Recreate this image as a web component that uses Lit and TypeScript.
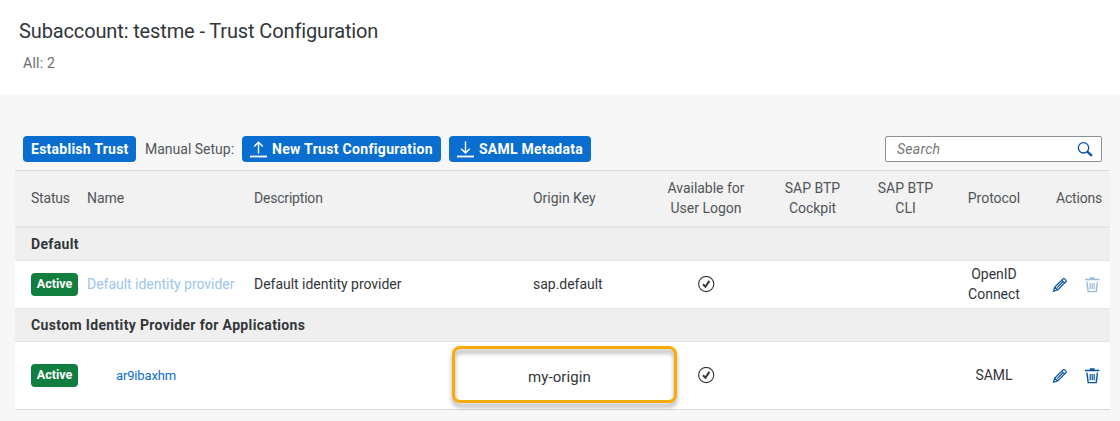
import { LitElement, html, css, svg } from "lit";
import { customElement, property } from "lit/decorators.js";

type IconName = "upload" | "download" | "search" | "edit" | "delete" | "accept";

const glyphs: Record<IconName, unknown> = {
  upload: svg`<path d="M0 15.5h17" stroke-width="1.8"/><path d="M8.5 12.5V1.5M4.2 5.4L8.5 1.2l4.3 4.2" stroke-width="1.4"/>`,
  download: svg`<path d="M0 15.5h17" stroke-width="1.8"/><path d="M8.5 .5v11.2M4.2 7.8l4.3 4.2 4.3-4.2" stroke-width="1.4"/>`,
  search: svg`<circle cx="6.5" cy="6.8" r="5.2" stroke-width="1.3"/><path d="M10.3 10.6l4.6 4.3" stroke-width="2.3"/>`,
  edit: svg`<path d="M1.5 15.2l1.2-4.2 8.6-8.3q.6-.6 1.2 0l1.6 1.6q.6.6 0 1.2l-8.5 8.4zM2.7 11l2.9 2.9M9.7 4.3l2.8 2.8M5.1 11.6l5.9-5.8" stroke-width="1.2"/>`,
  delete: svg`<path d="M1 3.5h14.4M5.8 1.9h4.8" stroke-width="1.5"/><path d="M2.9 5.6l1.3 10h8l1.3-10" stroke-width="1.4"/><path d="M6.2 7v6.2M8.2 7v6.2M10.2 7v6.2" stroke-width="1.2"/>`,
  accept: svg`<circle cx="8.2" cy="8" r="7.6" stroke-width="1.1"/><path d="M5 8.3l2.4 2.4 4-5.8" stroke-width="2"/>`,
};

@customElement("ui-icon")
class UiIcon extends LitElement {
  static styles = css`
    :host { display: inline-flex; width: 17px; height: 17px; flex: none; }
    svg { display: block; fill: none; stroke: currentColor; }
  `;
  @property() name: IconName = "edit";
  render() {
    return html`<svg width="17" height="17" viewBox="0 0 17 17">${glyphs[this.name]}</svg>`;
  }
}

@customElement("app-root")
class AppRoot extends LitElement {
  static styles = css`
    :host {
      display: block;
      height: 421px;
      overflow: hidden;
      background: #f7f7f7;
      color: #32363a;
      font: 14px/20px Roboto, "Noto Sans", sans-serif;
    }
    *, *::before { box-sizing: border-box; }
    header { height: 95px; background: #fff; padding: 18px 0 0 19px; }
    h1 { margin: 0; font-weight: 400; font-size: 20px; line-height: 26px; letter-spacing: -.13px; }
    .count { margin: 9px 0 0 4px; color: #6a6d70; letter-spacing: .25px; }
    .toolbar { display: flex; align-items: center; height: 26px; margin: 41px 18px 8px 23px; }
    .btn {
      display: flex; align-items: center; height: 26px; padding: 0 8px;
      border: 0; border-radius: 4px; background: #0a6ed1; color: #fff;
      font: 700 14px/20px Roboto, sans-serif; white-space: nowrap;
    }
    .btn ui-icon { margin-right: 5px; }
    .establish { width: 113px; letter-spacing: .25px; }
    .new { width: 199px; letter-spacing: .32px; margin-right: 8px; }
    .metadata { width: 142px; letter-spacing: .22px; }
    .label { width: 106px; padding-left: 9px; white-space: nowrap; color: #515559; }
    .search {
      display: flex; align-items: center; justify-content: space-between;
      width: 217px; height: 26px; margin-left: auto; padding: 0 7px 0 11px;
      border: 1px solid #89919a; border-radius: 2px; background: #fff;
      color: #74777a; font-style: italic; letter-spacing: .25px;
    }
    .search ui-icon { color: #0854a0; }
    .table { margin: 0 10px 0 15px; border-top: 1px solid #d9d9d9; border-bottom: 1px solid #d9d9d9; background: #fff; }
    .row {
      display: grid; align-items: center; padding-left: 16px;
      grid-template-columns: 56px 167px 279px 127px 92px 121px 65px 112px 60px;
      letter-spacing: -.02px;
    }
    .head { height: 57px; padding-bottom: 1px; background: #f2f2f2; border-bottom: 2px solid #e5e5e5; color: #515559; }
    .tight { letter-spacing: -.2px; }
    .group {
      display: flex; align-items: center; height: 33px; padding-left: 16px;
      background: #efefef; border-bottom: 1px solid #e5e5e5; font-weight: 700; letter-spacing: .35px;
    }
    .default { height: 48px; padding-bottom: 1px; border-bottom: 1px solid #e5e5e5; }
    .custom { height: 67px; padding-bottom: 1px; }
    .center { text-align: center; }
    .right { text-align: right; padding-right: 8px; }
    .badge {
      display: flex; align-items: center; justify-content: center; width: 47px; height: 23px;
      border-radius: 4px; background: #107e3e; color: #fff; font-weight: 700; font-size: 12.5px;
    }
    .link { color: #0a6ed1; }
    .disabled { color: #9dc5ed; }
    .indent { padding: 1px 0 0 29px; font-size: 13px; letter-spacing: -.15px; }
    .status { display: flex; justify-content: center; }
    .actions { display: flex; gap: 15px; padding: 1px 0 0 2px; color: #0854a0; }
    .faded { opacity: .4; }
    .origin { position: relative; height: 57px; line-height: 61px; margin-left: -5px; font-size: 15px; letter-spacing: .1px; }
    .origin::before {
      content: ""; position: absolute; left: -76px; top: -1px; width: 225px; height: 57px;
      border: 3px solid #fbab09; border-radius: 8px; filter: drop-shadow(0 4px 2px rgba(0, 0, 0, .35));
    }
  `;

  render() {
    return html`
      <header>
        <h1>Subaccount: testme - Trust Configuration</h1>
        <div class="count">All: 2</div>
      </header>
      <div class="toolbar">
        <button class="btn establish">Establish Trust</button>
        <span class="label">Manual Setup:</span>
        <button class="btn new"><ui-icon name="upload"></ui-icon>New Trust Configuration</button>
        <button class="btn metadata"><ui-icon name="download"></ui-icon>SAML Metadata</button>
        <div class="search"><span>Search</span><ui-icon name="search"></ui-icon></div>
      </div>
      <div class="table">
        <div class="row head">
          <span class="tight">Status</span><span>Name</span><span class="tight">Description</span><span>Origin Key</span>
          <span class="center">Available for<br />User Logon</span>
          <span class="center">SAP BTP<br />Cockpit</span>
          <span class="center">SAP BTP<br />CLI</span>
          <span class="center">Protocol</span><span class="right tight">Actions</span>
        </div>
        <div class="group">Default</div>
        <div class="row default">
          <span class="badge">Active</span>
          <span class="disabled">Default identity provider</span>
          <span>Default identity provider</span>
          <span>sap.default</span>
          <span class="status"><ui-icon name="accept"></ui-icon></span>
          <span></span><span></span>
          <span class="center">OpenID<br />Connect</span>
          <span class="actions"><ui-icon name="edit"></ui-icon><ui-icon class="faded" name="delete"></ui-icon></span>
        </div>
        <div class="group">Custom Identity Provider for Applications</div>
        <div class="row custom">
          <span class="badge">Active</span>
          <span class="link indent">ar9ibaxhm</span>
          <span></span>
          <span class="origin">my-origin</span>
          <span class="status"><ui-icon name="accept"></ui-icon></span>
          <span></span><span></span>
          <span class="center">SAML</span>
          <span class="actions"><ui-icon name="edit"></ui-icon><ui-icon name="delete"></ui-icon></span>
        </div>
      </div>
    `;
  }
}
